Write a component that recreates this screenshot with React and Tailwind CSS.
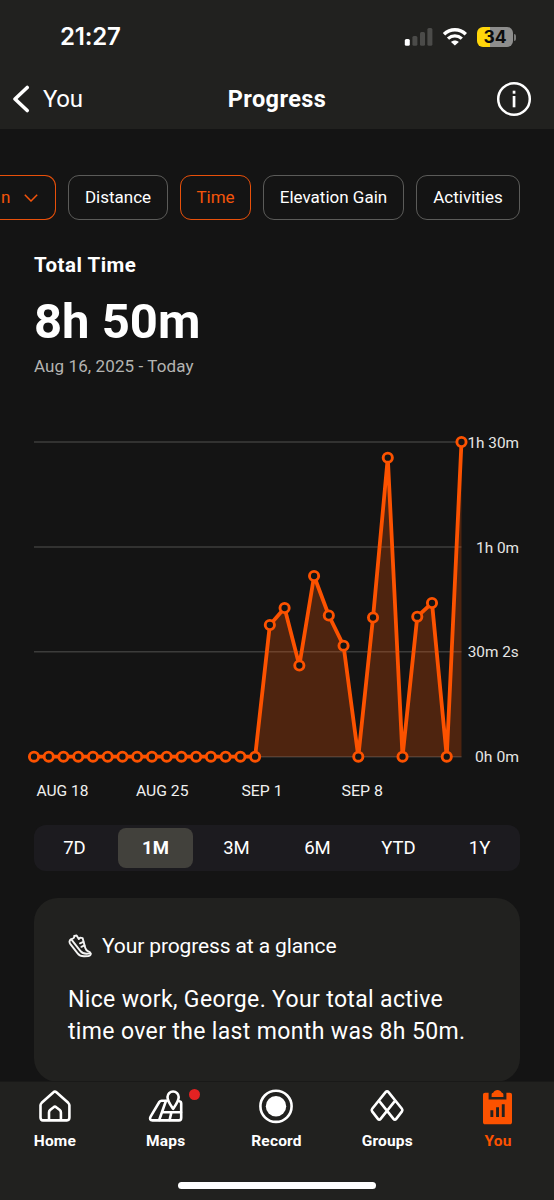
import React from "react";

const CHART = { left: 34, step: 14.741, top: 424 };

const POINTS = [
  ...Array(16).fill(756.7),
  625, 608, 665.5, 576, 615.5, 645.7, 756.7, 617.5, 457.7, 756.7, 616.7, 603, 756.7, 442,
].map((y, i) => [CHART.left + i * CHART.step, y - CHART.top]);

const GRID = [442, 547, 651.7, 756.7].map((y) => y - CHART.top);

const Y_LABELS = [
  { text: "1h 30m", y: 447.6, x: 467.5, w: 51.5 },
  { text: "1h 0m", y: 552.6, x: 476, w: 43 },
  { text: "30m 2s", y: 657.2, x: 467.7, w: 51 },
  { text: "0h 0m", y: 762.2, x: 475, w: 44 },
];

const X_LABELS = [
  { text: "AUG 18", x: 36.5, w: 52 },
  { text: "AUG 25", x: 136, w: 52.5 },
  { text: "SEP 1", x: 241.5, w: 41 },
  { text: "SEP 8", x: 341.5, w: 41.5 },
];

function StatusBar() {
  return (
    <div className="flex h-[68px] items-start justify-between pt-[23px] pr-[38px] pl-[60px]">
      <span className="font-[Inter] text-[24px] leading-[28px] font-semibold tracking-[-0.2px]">21:27</span>
      <div className="flex h-[28px] items-center">
        <svg width="29" height="20" viewBox="0 0 29 20" className="mr-[9px]">
          <rect x="0.8" y="12" width="5" height="6.8" rx="1.5" fill="#fff" />
          <rect x="8.4" y="9" width="5" height="9.8" rx="1.5" fill="#4b4b49" />
          <rect x="16" y="5" width="5" height="13.8" rx="1.5" fill="#4b4b49" />
          <rect x="23.4" y="1" width="5" height="17.8" rx="1.5" fill="#4b4b49" />
        </svg>
        <svg width="26" height="20" viewBox="0 0 26 20" className="mr-[9px]" fill="none" stroke="#fff">
          <path d="M2 7.2C8.2 1.4 17.6 1.4 23.8 7.2" strokeWidth="3.5" />
          <path d="M6 11.6C10.1 7.9 15.7 7.9 19.8 11.6" strokeWidth="3.3" />
          <path d="M12.9 18.6L9 14.9C11.3 12.9 14.5 12.9 16.8 14.9Z" fill="#fff" stroke="none" />
        </svg>
        <div className="flex h-[20px] w-[36px] items-center justify-center overflow-hidden rounded-[6px] bg-[linear-gradient(90deg,#ffd60a_35%,#8e8e8d_35%)]">
          <span className="font-[Inter] text-[17.5px] leading-none font-bold text-[#0b0b0b]">34</span>
        </div>
        <div className="ml-[1px] h-[7px] w-[2px] rounded-r-full bg-[#7b7b7a]" />
      </div>
    </div>
  );
}

function Header() {
  return (
    <header className="h-[129px] bg-[#21211f]">
      <StatusBar />
      <div className="grid h-[61px] grid-cols-3 items-center">
        <div className="flex items-center pl-[12px]">
          <svg width="18" height="28" viewBox="0 0 18 28" fill="none" stroke="#fff" strokeWidth="3.6" strokeLinecap="round" strokeLinejoin="round">
            <path d="M15.2 2.5L3 14L15.2 25.5" />
          </svg>
          <span className="ml-[13px] text-[24px] leading-[28px] tracking-[-0.3px]">You</span>
        </div>
        <h1 className="pt-[1px] text-center text-[23.5px] leading-[28px] font-bold tracking-[0.4px]">Progress</h1>
        <div className="flex justify-end pr-[22px]">
          <svg width="36" height="36" viewBox="0 0 36 36" fill="none">
            <circle cx="18" cy="18" r="15.8" stroke="#fff" strokeWidth="2.5" />
            <rect x="16.7" y="9.7" width="2.7" height="3" fill="#fff" />
            <rect x="16.7" y="15" width="2.7" height="11.3" fill="#fff" />
          </svg>
        </div>
      </div>
    </header>
  );
}

function Chip({ children, className }) {
  return (
    <button className={`flex h-[45px] shrink-0 items-center justify-center rounded-[11px] border-[1.5px] text-[17px] ${className}`}>
      {children}
    </button>
  );
}

function Chips() {
  return (
    <div className="mt-[46px] flex w-[554px] gap-[12px] overflow-hidden">
      <div className="flex h-[45px] w-[56px] shrink-0 items-center rounded-r-[11px] border-[1.5px] border-l-0 border-[#e8500a] pl-[1px] text-[17px] text-[#f4540b]">
        <span>n</span>
        <svg width="14" height="8" viewBox="0 0 14 8" className="ml-[14px]" fill="none" stroke="currentColor" strokeWidth="1.5">
          <path d="M0.8 0.8L7 7L13.2 0.8" />
        </svg>
      </div>
      <Chip className="w-[100px] border-[#5b5b59]">Distance</Chip>
      <Chip className="w-[71px] border-[#e8500a] text-[#f4540b]">Time</Chip>
      <Chip className="w-[141px] border-[#5b5b59]">Elevation Gain</Chip>
      <Chip className="w-[104px] border-[#5b5b59]">Activities</Chip>
    </div>
  );
}

function Chart() {
  const line = POINTS.map(([x, y]) => `${x},${y}`).join(" ");
  const base = 756.7 - CHART.top;
  return (
    <svg width="554" height="380" viewBox="0 0 554 380" className="mt-[46px] block">
      {GRID.map((y) => (
        <line key={y} x1="34" x2="461.5" y1={y} y2={y} stroke="#3c3c3b" strokeWidth="1.5" />
      ))}
      <polygon points={`34,${base} ${line} 461.5,${base}`} fill="#fc5200" fillOpacity="0.25" />
      <polyline points={line} fill="none" stroke="#fc5200" strokeWidth="3.8" strokeLinejoin="bevel" />
      {POINTS.map(([x, y]) => (
        <circle key={x} cx={x} cy={y} r="4.6" fill="#141414" stroke="#fc5200" strokeWidth="2.9" />
      ))}
      {Y_LABELS.map((l) => (
        <text key={l.text} x={l.x} y={l.y - CHART.top} textLength={l.w} lengthAdjust="spacingAndGlyphs" fontSize="15.5" fill="#e6e6e5">{l.text}</text>
      ))}
      {X_LABELS.map((l) => (
        <text key={l.text} x={l.x} y={796 - CHART.top} textLength={l.w} lengthAdjust="spacingAndGlyphs" fontSize="15.5" fill="#f0f0ef">{l.text}</text>
      ))}
    </svg>
  );
}

function RangePicker() {
  return (
    <div className="mx-[34px] mt-[21px] flex h-[46px] items-center rounded-[12px] bg-[#1c1b1f] text-[18.5px]">
      {["7D", "1M", "3M", "6M", "YTD", "1Y"].map((r) => (
        <div key={r} className="flex flex-1 justify-center">
          <div className={`flex h-[40px] w-[75px] items-center justify-center rounded-[8px] pt-[1px] ${r === "1M" ? "bg-[#42413c] font-bold" : ""}`}>
            {r}
          </div>
        </div>
      ))}
    </div>
  );
}

function ShoeIcon() {
  return (
    <svg width="24" height="24" viewBox="0 0 24 24" fill="none" stroke="#f4f4f3" strokeWidth="1.9" strokeLinecap="round" strokeLinejoin="round">
      <path d="M3.2 5.1C1.2 6.3 1 8.2 2.4 10.2L9.6 19.4C11.3 21.6 13.5 22.5 16.6 22.3L20.4 22C22.3 21.8 23.1 20.6 22.6 19.2C22.3 18.3 21.4 17.8 20.3 17.4C18.7 16.8 17.7 15.6 17.2 13.8L14.6 4.1L12.2 3.6L10.8 5L8.6 1.5L6.2 1.9C6.5 3.7 5.2 4.9 3.2 5.1Z" />
      <path d="M3.3 5.4L12.3 16.9C14 19 16 19.8 18.6 19.7L22.4 19.4" />
      <path d="M12 9.3L15.4 7.8M13.4 12.8L16.4 11.3" />
    </svg>
  );
}

function GlanceCard() {
  return (
    <section className="mx-[34px] mt-[27px] h-[184px] rounded-[24px] bg-[#21211f] px-[34px] pt-[34px]">
      <div className="flex h-[28px] items-center">
        <ShoeIcon />
        <h2 className="ml-[10px] text-[21px] leading-[28px] tracking-[-0.12px]">Your progress at a glance</h2>
      </div>
      <p className="mt-[24px] text-[23px] leading-[32px] tracking-[0.35px] whitespace-nowrap">
        Nice work, George. Your total active
        <br />
        time over the last month was 8h 50m.
      </p>
    </section>
  );
}

const ICONS = {
  Home: (
    <path d="M16.5 2.2C17.2 1.5 18.6 1.5 19.4 2.2L31.2 12.8C32 13.6 32.4 14.3 32.4 15.3V27.6C32.4 29.2 31.5 30.4 30 30.4H5.9C4.4 30.4 3.5 29.2 3.5 27.6V15.3C3.5 14.3 3.9 13.6 4.7 12.8ZM12 30V22.5C12 21.3 12.3 20.7 13.1 20L16.6 17.2C17.4 16.5 18.4 16.5 19.2 17.2L22.8 20C23.6 20.7 23.9 21.3 23.9 22.5V30" />
  ),
  Maps: (
    <>
      <path d="M18.8 10.7H13.6C12.5 10.7 11.9 11.1 11.3 12L2.6 26.6C1.4 28.8 2.2 30.4 4.5 30.4H31C32.5 30.4 33.2 29.3 33.2 27.8V13.5C33.2 12.1 32.7 11.5 31.4 11.3" />
      <path d="M17.9 11L11.2 30M14.3 22.2H33M23.4 22.4L21.6 30" />
      <path d="M25.1 18.8C22.3 14.7 19.5 11.3 19.5 7.1A5.6 5.6 0 0 1 30.7 7.1C30.7 11.3 27.9 14.7 25.1 18.8Z" />
    </>
  ),
  Record: (
    <>
      <circle cx="18" cy="16.3" r="15.6" />
      <circle cx="18" cy="16.3" r="10.2" fill="currentColor" stroke="none" />
    </>
  ),
  Groups: (
    <path d="M16.6 2.1C17.5 1.1 18.7 1.1 19.5 2.1L32.9 18.8C33.7 19.8 33.7 20.5 33 21.4L27.2 28.9C26.4 29.9 25.3 29.9 24.5 28.9L10.7 11.6M16.6 2.1L3.2 18.8C2.4 19.8 2.4 20.5 3.1 21.4L8.9 28.9C9.7 29.9 10.8 29.9 11.6 28.9L25.4 11.6" />
  ),
  You: (
    <g stroke="none" fill="currentColor">
      <path fillRule="evenodd" d="M5.3 2.8H8.6V9.6H26.4V2.8H29.7C31.3 2.8 32 3.6 32 5.1V32C32 33.5 31.3 34.3 29.7 34.3H5.3C3.7 34.3 3 33.5 3 32V5.1C3 3.6 3.7 2.8 5.3 2.8ZM10.4 20.2V27.1H13.3V20.2ZM16.1 17.2V27.1H19V17.2ZM21.8 14.2V27.1H24.7V14.2Z" />
      <path d="M11.6 7V4.7C11.6 3.4 12.2 2.9 13.2 2.7C14.2 0.8 15.6 0 17.5 0C19.4 0 20.8 0.8 21.8 2.7C22.8 2.9 23.4 3.4 23.4 4.7V7Z" />
    </g>
  ),
};

function TabBar() {
  return (
    <nav className="flex h-[119px] flex-col items-center border-t border-[#191918] bg-[#21211f]">
      <div className="flex h-[98px] w-full justify-between">
        {Object.keys(ICONS).map((name) => (
          <div key={name} className={`relative flex w-[110.8px] flex-col items-center pt-[8px] ${name === "You" ? "text-[#fc5200]" : "text-white"}`}>
            <svg width="36" height="36" viewBox="0 0 36 36" fill="none" stroke="currentColor" strokeWidth="2.6" strokeLinejoin="round" strokeLinecap="round" className="-ml-px overflow-visible">
              {ICONS[name]}
            </svg>
            <span className="mt-[5px] -ml-px text-[15.5px] leading-[20px] font-bold tracking-[0.2px]">{name}</span>
            {name === "Maps" && <span className="absolute top-[7px] left-[78px] size-[11px] rounded-full bg-[#e32222]" />}
          </div>
        ))}
      </div>
      <div className="mt-[2px] h-[7px] w-[198px] rounded-full bg-white" />
    </nav>
  );
}

export default function App() {
  return (
    <div className="flex h-[1200px] w-[554px] flex-col overflow-hidden bg-[#141414] font-[Roboto,sans-serif] text-white">
      <Header />
      <main className="h-[952px] shrink-0">
        <Chips />
        <div className="pl-[34px]">
          <h2 className="mt-[31px] text-[20.5px] leading-[28px] font-bold tracking-[0.5px]">Total Time</h2>
          <div className="mt-[15px] text-[49px] leading-[56px] font-bold">8h 50m</div>
          <div className="mt-[4px] text-[17px] leading-[24px] tracking-[0.1px] text-[#b4b4b2]">Aug 16, 2025 - Today</div>
        </div>
        <Chart />
        <RangePicker />
        <GlanceCard />
      </main>
      <TabBar />
    </div>
  );
}
